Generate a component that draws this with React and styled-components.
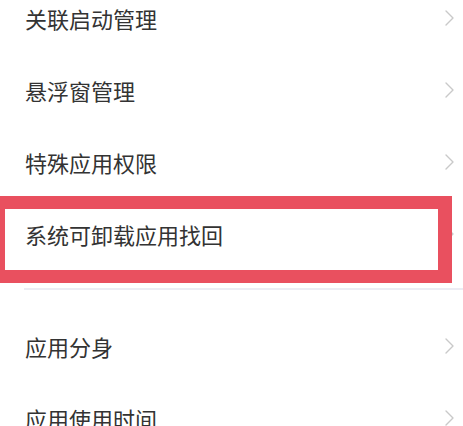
import React from "react";
import styled, { createGlobalStyle } from "styled-components";

const Global = createGlobalStyle`
  html, body { margin: 0; padding: 0; background: #ffffff; }
  body { overflow: hidden; font-family: "Noto Sans CJK SC", "Noto Sans", sans-serif; }
`;

const Page = styled.div`
  width: 463px;
  height: 426px;
  overflow: hidden;
  background: #ffffff;
`;

const List = styled.div`
  margin-top: -18px;
  display: flex;
  flex-direction: column;
`;

const Section = styled.div`
  display: flex;
  flex-direction: column;
  padding: ${(p) => p.$pad || "0"};
`;

const Divider = styled.div`
  height: 2px;
  margin-left: 24px;
  background: #ececf3;
`;

const Row = styled.div`
  position: relative;
  height: 72px;
  display: flex;
  align-items: center;
  justify-content: space-between;
  padding: 0 8px 0 25px;
`;

const Label = styled.span`
  font-size: 22px;
  line-height: 1;
  color: #333333;
  letter-spacing: 0;
`;

const Chevron = styled.svg`
  width: 11px;
  height: 18px;
  flex-shrink: 0;
`;

const Highlight = styled.div`
  position: absolute;
  left: -8px;
  right: 11px;
  top: -2px;
  bottom: -13px;
  border: 13px solid #e9505f;
  border-right-width: 14px;
  pointer-events: none;
`;

const Arrow = () => (
  <Chevron viewBox="0 0 11 18">
    <polyline
      points="2,2 9,9 2,16"
      fill="none"
      stroke="#c9c9c9"
      strokeWidth="1.4"
      strokeLinecap="round"
      strokeLinejoin="round"
    />
  </Chevron>
);

const Item = ({ label, marked }) => (
  <Row>
    <Label>{label}</Label>
    <Arrow />
    {marked && <Highlight />}
  </Row>
);

export default function App() {
  return (
    <Page>
      <Global />
      <List>
        <Section $pad="0 0 18px 0">
          <Item label="关联启动管理" />
          <Item label="悬浮窗管理" />
          <Item label="特殊应用权限" />
          <Item label="系统可卸载应用找回" marked />
        </Section>
        <Divider />
        <Section $pad="20px 0 0 0">
          <Item label="应用分身" />
          <Item label="应用使用时间" />
        </Section>
      </List>
    </Page>
  );
}
